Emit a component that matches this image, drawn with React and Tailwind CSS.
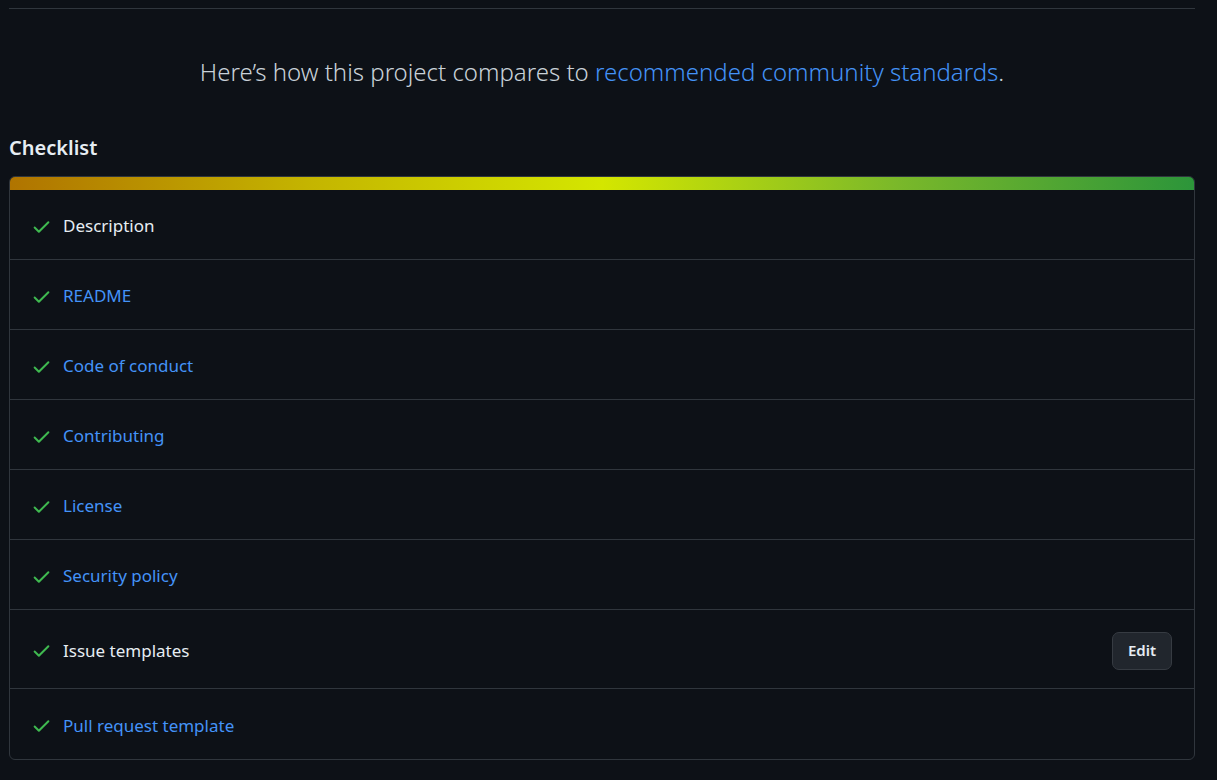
import { Check } from 'lucide-react'

const ITEMS = [
  { label: 'Description', link: false },
  { label: 'README', link: true },
  { label: 'Code of conduct', link: true },
  { label: 'Contributing', link: true },
  { label: 'License', link: true },
  { label: 'Security policy', link: true },
  { label: 'Issue templates', link: false, edit: true },
  { label: 'Pull request template', link: true },
]

function CheckIcon() {
  return (
    <svg width="21" height="21" viewBox="0 0 16 16" className="shrink-0 fill-[#3fb950]">
      <path d="M13.78 4.22a.75.75 0 0 1 0 1.06l-7.25 7.25a.75.75 0 0 1-1.06 0L2.22 9.28a.751.751 0 0 1 .018-1.042.751.751 0 0 1 1.042-.018L6 10.94l6.72-6.72a.75.75 0 0 1 1.06 0Z" />
    </svg>
  )
}

function Row({ item, last }) {
  return (
    <div
      className={`flex items-center justify-between pl-[21px] pr-[22px] pt-[3px] ${item.edit ? 'h-[79px]' : 'h-[70px]'} ${last ? '' : 'border-b border-[#30363d]'}`}
    >
      <div className="flex items-center gap-[11px]">
        <CheckIcon />
        {item.link ? (
          <a href="#" className="text-[#4493f8] text-[17px]">{item.label}</a>
        ) : (
          <span className="text-[#e6edf3] text-[17px]">{item.label}</span>
        )}
      </div>
      {item.edit && (
        <button className="h-[38px] px-[15px] rounded-[7px] bg-[#21262d] border border-[#363b42] text-[#e6edf3] text-[15px] font-semibold">
          Edit
        </button>
      )}
    </div>
  )
}

export default function App() {
  return (
    <div
      className="min-h-screen w-full bg-[#0d1117] pl-[9px] pr-[22px] pt-[8px]"
      style={{ fontFamily: '"Noto Sans", "Open Sans", sans-serif' }}
    >
      <div className="border-t border-[#30363d]" />
      <p className="text-center text-[24px] font-light text-[#c9d1d9] mt-[47px] leading-[32px]">
        Here’s how this project compares to{' '}
        <a href="#" className="text-[#4493f8]">recommended community standards</a>.
      </p>
      <h2 className="mt-[47px] text-[20px] font-semibold text-[#e6edf3] leading-[26px]">Checklist</h2>
      <div className="mt-[15px] border border-[#30363d] rounded-[6px] overflow-hidden">
        <div className="h-[13px] bg-[linear-gradient(90deg,#b07400_0%,#c4b400_25%,#d4e600_50%,#7ab82a_75%,#2c953a_100%)]" />
        {ITEMS.map((item, i) => (
          <Row key={item.label} item={item} last={i === ITEMS.length - 1} />
        ))}
      </div>
    </div>
  )
}
